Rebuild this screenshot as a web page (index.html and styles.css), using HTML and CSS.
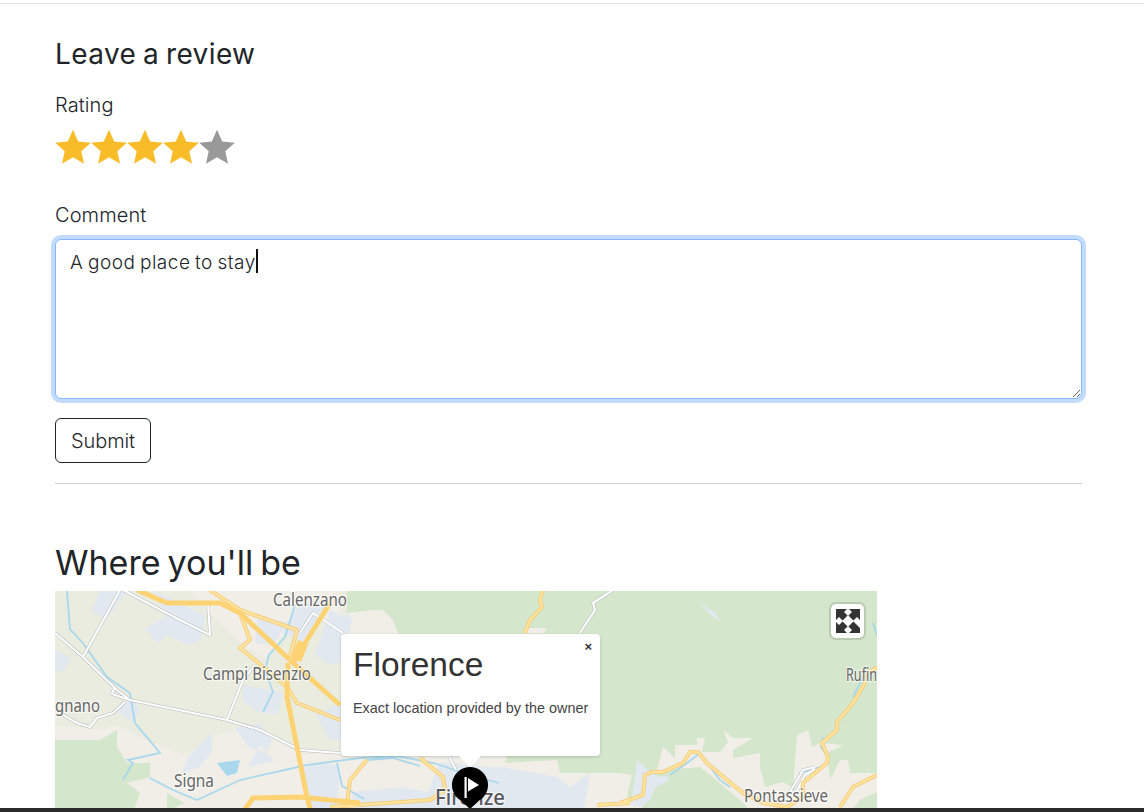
FILE: index.html
```html
<!DOCTYPE html>
<html lang="en">
<head>
<meta charset="utf-8">
<title>Leave a review</title>
<link rel="stylesheet" href="styles.css">
</head>
<body>
<main class="page">
  <section class="review">
    <h2 class="review-title">Leave a review</h2>
    <div class="field-label">Rating</div>
    <div class="stars">
      <svg class="star on" viewBox="0 0 36 36"><path d="M18 .8l5.2 11.6 12.6 1.3-9.5 8.5 2.7 12.500L18 28.300 6.999 34.700l2.700-12.500L.2 13.700l12.600-1.300z"/></svg>
      <svg class="star on" viewBox="0 0 36 36"><path d="M18 .8l5.2 11.6 12.6 1.3-9.5 8.5 2.7 12.500L18 28.300 6.999 34.700l2.700-12.500L.2 13.700l12.600-1.300z"/></svg>
      <svg class="star on" viewBox="0 0 36 36"><path d="M18 .8l5.2 11.6 12.6 1.3-9.5 8.5 2.7 12.500L18 28.300 6.999 34.700l2.700-12.500L.2 13.700l12.600-1.300z"/></svg>
      <svg class="star on" viewBox="0 0 36 36"><path d="M18 .8l5.2 11.6 12.6 1.3-9.5 8.5 2.7 12.500L18 28.300 6.999 34.700l2.700-12.500L.2 13.700l12.600-1.300z"/></svg>
      <svg class="star off" viewBox="0 0 36 36"><path d="M18 .8l5.2 11.6 12.6 1.3-9.5 8.5 2.7 12.500L18 28.300 6.999 34.700l2.700-12.500L.2 13.700l12.600-1.300z"/></svg>
    </div>
    <label class="field-label comment-label" for="comment">Comment</label>
    <div class="comment-wrap">
      <textarea class="comment" id="comment" readonly>A good place to stay</textarea>
      <span class="caret"></span>
    </div>
    <button class="submit" type="button">Submit</button>
  </section>
  <hr class="rule">
  <section class="location">
    <h2 class="location-title">Where you'll be</h2>
    <div class="map">
      <svg class="map-art" viewBox="55 591 822 221">
        <rect class="land" x="55" y="591" width="822" height="221"/>
        <path class="pale" d="M55 725l45 5 17-5 40 20 30 10 30-20 25-5 30 5 30 20 38-5 30 90H55zM190 591h150v22l-55 20-20 25-25-15-30-30z"/>
        <path class="forest" d="M347 591H877V812H347z"/>
        <path class="pale" d="M347 613l26-3h10l10 10 5 13 10 40-38 90H347zM340 756H507l-2 7 52-3 3 13H620l12 2-5 22 23 0 13-50 12 11V745h22v-7h8l-3 14h18l8-10-5-12 10 8h20l-20 12v8l27-5v14l5 20 17-5 11 5 4-52 11-5 4 17 8-4 23 2-16 8 3 27 10-20h8l2 13h27V812H340z"/>
        <path class="forest" d="M653 771l47-4 20 16 23 20 8 9H640zM850 812l10-12 17-8v20z"/>
        <path class="forest" d="M55 740H100L117 730V747L127 763H150V777L127 783 140 793 133 812H55zM167 793l17 10-17 9z"/>
        <path class="pale" d="M523 633l2-5h22l-3 5z"/>
        <path class="urban" d="M100 591h28l-22 28-14-8zM155 591l50 25-4 24-14 5-20-10-10 8-12-14 20-12zM300 603l30 0-24 40-24-10zM330 610l20 10 0 40-20 5-15-10zM258 615l30 8-15 22-18-2zM243 685l40 8-6 22-20-4-14-10zM316 715l30-15 0 40-16 0zM55 650l16 8-8 14-8-2zM120 703l14-3 6 12-8 10-12-8zM235 728l25-5 12 18-6 12-18-6zM212 732l-24 25-6 16 16-5 14-16zM260 745l-12 22 26-6zM300 770l20-8 20 5-4 45-22 0z"/>
        <path class="urban" d="M487 767h16l54 10 13 10 20-14-6 39H350l3-20 50-5 25 5 12-30zM345 612l8 8-6 12zM700 603l14 9 7 10-11-8zM637 760l13 12 10 5-10 23-9 7-11-2 5-25zM655 778l12-2 3 3-12 8z"/>
        <g class="water-line">
          <path d="M67 591l3 38 13 14 24 34 23 16 5 30 25 30-32 7 5 3-10 17"/>
          <path d="M150 778l23 12 24 10 43-20 67-15 53-7 37-2 37 7 35 12 30 8"/>
          <path d="M295 605l-10 32-16 18-4 15 8 22-10 20"/>
          <path d="M367 760l26-2 27 8M337 763l5 23 22 13"/>
          <path d="M670 775l17-12 13-10 20 27 10 7M793 790l7-17 20-6M823 737l-2 10 7 10M853 697l7-14 13-15M877 635l-4-12"/>
        </g>
        <path class="lake" d="M217 763l23-3-3 13-10 3z"/>
        <g class="minor-case">
          <path d="M55 633l28 24 34 33 13 10 97 20 33 10 40 20 40 3M120 590l-37 67M123 590l57 30 30 15-2-32M227 720l16-40 12-15M300 633l13-20 30 20M125 702l-12 11-16 5-7 9-13-4-22-13M130 700l-18-6 2-6M613 590l-20 13 2 7-15 23M449 756l7 14M790 792l13-22 12-3M795 795l10-20 10-6"/>
        </g>
        <g class="minor">
          <path d="M55 633l28 24 34 33 13 10 97 20 33 10 40 20 40 3M120 590l-37 67M123 590l57 30 30 15-2-32M227 720l16-40 12-15M300 633l13-20 30 20M125 702l-12 11-16 5-7 9-13-4-22-13M130 700l-18-6 2-6M613 590l-20 13 2 7-15 23M449 756l7 14M790 792l13-22 12-3M795 795l10-20 10-6"/>
        </g>
        <g class="road-case">
          <path d="M210 590l30 20 57 20-7 27M240 613l10 27-10 8 27 22 20 17 10 16 43 17M543 590l-3 10 2 7-12 13-5 13M367 760l-17 20-3 23M420 758l23 19 2 13-15 10-100 7M597 805l33-2M620 803l23-8 2-20 7-3h11l20-9 7-11h8l9 11 20 17 16 13 20 10 24 4 16-10v-14l24-20 1-6-6-14 15-13v-8l16-19 12-20v-10l12-5M840 807l13-20 24-12"/>
        </g>
        <g class="road">
          <path d="M210 590l30 20 57 20-7 27M240 613l10 27-10 8 27 22 20 17 10 16 43 17M543 590l-3 10 2 7-12 13-5 13M367 760l-17 20-3 23M420 758l23 19 2 13-15 10-100 7M597 805l33-2M620 803l23-8 2-20 7-3h11l20-9 7-11h8l9 11 20 17 16 13 20 10 24 4 16-10v-14l24-20 1-6-6-14 15-13v-8l16-19 12-20v-10l12-5M840 807l13-20 24-12"/>
        </g>
        <g class="motorway">
          <path d="M137 590l30 13h53l20 10 50 47 50 45M330 603l-23 37-14 23M288 663l-1 34 20 100 4 15M243 812l10-14 47-1 60 6"/>
          <path class="junction" d="M303 642l-7 18"/>
        </g>
        <g class="labels">
          <text x="273" y="606" textLength="74" lengthAdjust="spacingAndGlyphs">Calenzano</text>
          <text x="203" y="680" textLength="108" lengthAdjust="spacingAndGlyphs">Campi Bisenzio</text>
          <text x="55" y="712" textLength="45" lengthAdjust="spacingAndGlyphs">gnano</text>
          <text x="174" y="787" textLength="40" lengthAdjust="spacingAndGlyphs">Signa</text>
          <text x="846" y="681" textLength="31" lengthAdjust="spacingAndGlyphs">Rufin</text>
          <text x="744" y="802" textLength="84" lengthAdjust="spacingAndGlyphs">Pontassieve</text>
          <text class="city" x="435" y="805" textLength="70" lengthAdjust="spacingAndGlyphs">Firenze</text>
        </g>
      </svg>
      <button class="fullscreen" type="button" aria-label="Fullscreen">
        <svg viewBox="0 0 24 24"><path d="M0 0h11L8 3l3.600 3.600-5 5L3 8l-3 3zM24 0v11l-3-3-3.600 3.600-5-5L16 3l-3-3zM24 24H13l3-3-3.600-3.600 5-5L21 16l3 3zM0 24V13l3 3 3.600-3.600 5 5L8 21l3 3z"/></svg>
      </button>
      <div class="popup">
        <span class="popup-close">×</span>
        <h3 class="popup-title">Florence</h3>
        <p class="popup-text">Exact location provided by the owner</p>
      </div>
      <span class="popup-tip"></span>
      <svg class="pin" viewBox="0 0 36 42"><path d="M18 0a18 18 0 0 1 9.500 33.300L18 42 8.500 33.300A18 18 0 0 1 18 0z"/><path class="flag" d="M12.500 10h2.200v21h-2.200zM16 11l11 7-11 6.500z"/></svg>
    </div>
  </section>
</main>
<div class="bottom-bar"></div>
</body>
</html>
```
FILE: styles.css
```css
* { box-sizing: border-box; }
html, body { height: 100%; }
body {
  margin: 0;
  overflow: hidden;
  background: #fff;
  color: #212529;
  font-family: Inter, "Open Sans", sans-serif;
}
.page {
  margin-top: 3px;
  border-top: 1px solid #e4e4e4;
  padding: 0 62px 0 55px;
}
.review-title {
  margin: 30px 0 0;
  font-size: 28px;
  line-height: 40px;
  font-weight: 400;
  letter-spacing: .4px;
  word-spacing: -1.5px;
}
.field-label {
  display: block;
  margin-top: 18px;
  font-size: 20px;
  line-height: 27px;
  font-weight: 350;
  letter-spacing: .1px;
}
.stars { display: flex; margin-top: 10px; height: 36px; }
.star { width: 36px; height: 36px; display: block; }
.star.on path { fill: #f8bc28; }
.star.off path { fill: #999; }
.comment-label { margin-top: 37px; }
.comment-wrap { position: relative; display: flex; margin-top: 10px; }
.comment {
  display: block;
  width: 100%;
  height: 160px;
  padding: 8px 14px;
  border: 1px solid #86b7fe;
  border-radius: 6px;
  outline: 0;
  box-shadow: 0 0 0 4px rgba(13, 110, 253, .25);
  font: 350 19px/30px Inter, sans-serif;
  letter-spacing: .5px;
  word-spacing: -1.2px;
  color: #212529;
  resize: both;
}
.caret {
  position: absolute;
  left: 201px;
  top: 10px;
  width: 2px;
  height: 24px;
  background: #111;
}
.submit {
  display: block;
  width: 96px;
  height: 45px;
  margin-top: 19px;
  padding: 0;
  background: #fff;
  border: 1px solid #212529;
  border-radius: 6px;
  font: 350 20px/1 Inter, sans-serif;
  letter-spacing: -.1px;
  color: #212529;
}
.rule { margin: 20px 0 0; border: 0; border-top: 1px solid #cfcfcf; }
.location-title {
  margin: 52px 0 1px;
  font-size: 34px;
  line-height: 54px;
  font-weight: 400;
  letter-spacing: 0;
  word-spacing: -2.5px;
}
.map {
  position: relative;
  width: 822px;
  height: 221px;
  overflow: hidden;
}
.map-art { display: block; width: 822px; height: 221px; }
.land { fill: #eaecdf; }
.pale { fill: #f1eee8; }
.forest { fill: #d4e6cc; }
.urban { fill: #e2e8f0; }
.lake { fill: #a9d8ec; }
.water-line path { fill: none; stroke: #a9d8ec; stroke-width: 1.800; }
.minor-case path { fill: none; stroke: #b4b9bb; stroke-width: 3.200; stroke-linejoin: round; }
.minor path { fill: none; stroke: #fff; stroke-width: 2.200; stroke-linejoin: round; }
.road-case path { fill: none; stroke: #f6c970; stroke-width: 4; stroke-linejoin: round; }
.road path { fill: none; stroke: #fde3a0; stroke-width: 2.400; stroke-linejoin: round; }
.motorway path { fill: none; stroke: #fdd272; stroke-width: 5; stroke-linejoin: round; }
.motorway .junction { stroke-width: 11; }
.labels text {
  font-family: "Noto Sans", sans-serif;
  font-size: 18px;
  fill: #666;
  stroke: rgba(255, 255, 255, .65);
  stroke-width: 2.500px;
  paint-order: stroke;
}
.labels .city { font-size: 22px; font-weight: 500; fill: #58585c; }
.fullscreen {
  position: absolute;
  left: 774px;
  top: 11px;
  width: 37px;
  height: 38px;
  padding: 6px;
  background: #fff;
  background-clip: padding-box;
  border: 2px solid rgba(0, 0, 0, .12);
  border-radius: 7px;
  display: flex;
  align-items: center;
  justify-content: center;
}
.fullscreen svg { width: 24px; height: 24px; display: block; fill: #333; flex: none; }
.popup {
  position: absolute;
  left: 286px;
  top: 43px;
  width: 259px;
  height: 122px;
  padding: 12px 12px 0;
  background: #fff;
  border-radius: 4px;
  box-shadow: 0 1px 3px rgba(0, 0, 0, .18);
  color: #333;
  font-family: "Liberation Sans", Arial, sans-serif;
}
.popup-title { margin: 0; font-size: 33.500px; line-height: 38px; font-weight: 400; }
.popup-text { margin: 15px 0 0; font-size: 14.400px; line-height: 18px; white-space: nowrap; color: #444; }
.popup-close {
  position: absolute;
  right: 8px;
  top: 4px;
  font-size: 13px;
  line-height: 18px;
  font-weight: 700;
  color: #333;
}
.popup-tip {
  position: absolute;
  left: 404px;
  top: 165px;
  width: 0;
  height: 0;
  border-left: 11px solid transparent;
  border-right: 11px solid transparent;
  border-top: 11px solid #fff;
}
.pin { position: absolute; left: 397px; top: 176px; width: 36px; height: 42px; display: block; }
.pin path { fill: #000; }
.pin .flag { fill: #fff; }
.bottom-bar {
  position: fixed;
  left: 0;
  right: 0;
  bottom: 0;
  height: 4px;
  background: #2b2b2b;
}
```
